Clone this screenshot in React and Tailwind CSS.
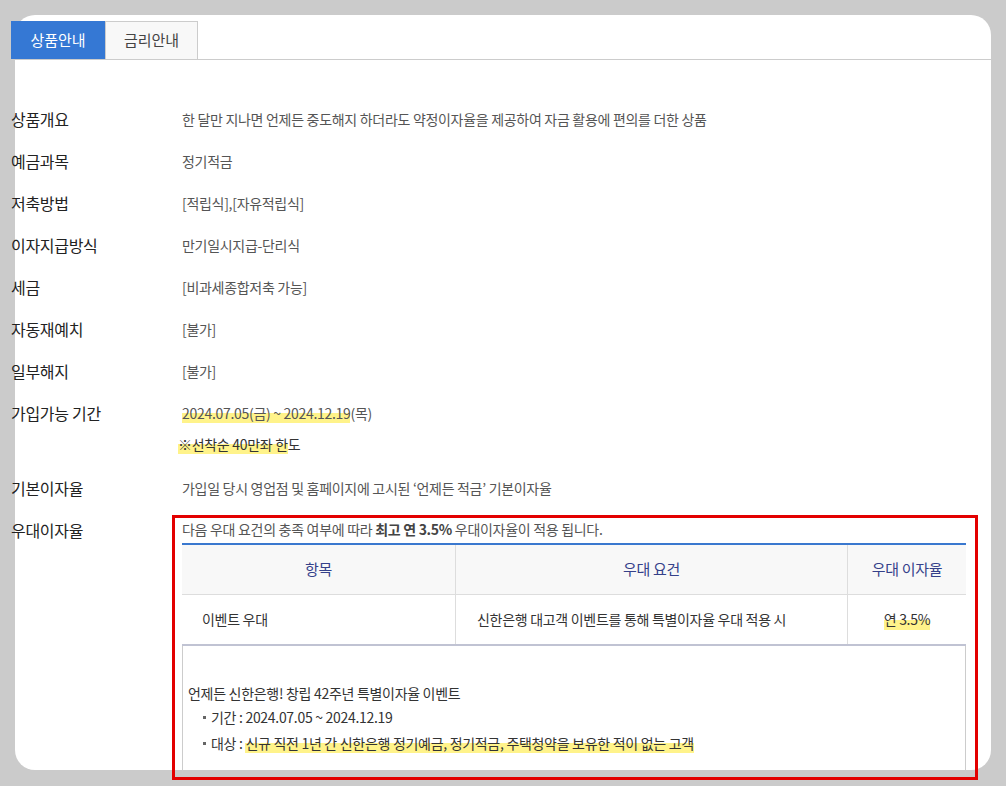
export default function App() {
  const rows = [
    ["상품개요", "한 달만 지나면 언제든 중도해지 하더라도 약정이자율을 제공하여 자금 활용에 편의를 더한 상품"],
    ["예금과목", "정기적금"],
    ["저축방법", "[적립식],[자유적립식]"],
    ["이자지급방식", "만기일시지급-단리식"],
    ["세금", "[비과세종합저축 가능]"],
    ["자동재예치", "[불가]"],
    ["일부해지", "[불가]"],
  ];
  const mark = "bg-[linear-gradient(transparent_50%,#fff38a_50%)]";

  return (
    <div className="h-[786px] overflow-hidden bg-[#cbcbcb] pt-[15px] pl-[15px] font-['Noto_Sans_CJK_KR','Noto_Sans',sans-serif]">
      <div className="relative w-[976px] h-[755px] bg-white rounded-[20px]">
        <div className="relative -ml-[4px] w-[980px] pt-[6px]">
          {/* tabs */}
          <div className="flex h-[39px] border-b border-[#cccccc]">
            <div className="w-[94px] bg-[#3578d4] text-white text-[15px] flex items-center justify-center">
              상품안내
            </div>
            <div className="w-[93px] bg-[#f8f8f8] border border-b-0 border-[#cccccc] text-[#444] text-[15px] flex items-center justify-center">
              금리안내
            </div>
          </div>

          <div className="pt-[38px] tracking-[-0.3px]">
            {rows.map(([label, value]) => (
              <div key={label} className="flex leading-[42px]">
                <div className="w-[171px] text-[16px] text-[#222]">{label}</div>
                <div className="text-[14px] text-[#555]">{value}</div>
              </div>
            ))}

            <div className="flex">
              <div className="w-[171px] text-[16px] text-[#222] leading-[42px]">가입가능 기간</div>
              <div className="text-[14px] text-[#555]">
                <div className="leading-[42px]">
                  <span className={mark}>2024.07.05(금) ~ 2024.12.19</span>(목)
                </div>
                <div className="leading-[20px] -ml-[4px] text-[#333]">
                  <span className={mark}>※선착순 40만좌 한</span>도
                </div>
              </div>
            </div>

            <div className="flex leading-[42px] mt-[13px]">
              <div className="w-[171px] text-[16px] text-[#222]">기본이자율</div>
              <div className="text-[14px] text-[#555]">가입일 당시 영업점 및 홈페이지에 고시된 ‘언제든 적금’ 기본이자율</div>
            </div>

            <div className="flex">
              <div className="w-[171px] text-[16px] text-[#222] leading-[42px]">우대이자율</div>
              <div className="w-[784px]">
                <div className="text-[14px] text-[#555] leading-[20px] pt-[10px] pb-[4px]">
                  다음 우대 요건의 충족 여부에 따라{" "}
                  <b className="text-[#444] font-bold">최고 연 3.5%</b> 우대이자율이 적용 됩니다.
                </div>
                <div className="border-t-2 border-[#3a78cf]">
                  <div className="flex h-[50px] bg-[#f8f8f8] border-b border-[#dddddd] text-[15px] text-[#35418a]">
                    <div className="w-[274px] flex items-center justify-center border-r border-[#dddddd]">항목</div>
                    <div className="w-[392px] flex items-center justify-center border-r border-[#dddddd]">우대 요건</div>
                    <div className="flex-1 flex items-center justify-center">우대 이자율</div>
                  </div>
                  <div className="flex h-[51px] border-b-2 border-[#c0c3d3] text-[14px] text-[#333]">
                    <div className="w-[274px] flex items-center pl-[20px] border-r border-[#dddddd]">이벤트 우대</div>
                    <div className="w-[392px] flex items-center pl-[21px] border-r border-[#dddddd]">
                      신한은행 대고객 이벤트를 통해 특별이자율 우대 적용 시
                    </div>
                    <div className="flex-1 flex items-center justify-center">
                      <span className={mark}>연 3.5%</span>
                    </div>
                  </div>
                  <div className="h-[129px] border border-t-0 border-[#cccccc] pl-[5px] pt-[37px] text-[14px] text-[#333]">
                    <div className="leading-[20px]">언제든 신한은행! 창립 42주년 특별이자율 이벤트</div>
                    <div className="leading-[20px] mt-[4px] pl-[15px] flex items-center">
                      <span className="inline-block w-[3px] h-[3px] bg-[#666] mr-[5px]" />기간 : 2024.07.05 ~ 2024.12.19
                    </div>
                    <div className="leading-[20px] mt-[6px] pl-[15px] flex items-center whitespace-pre">
                      <span className="inline-block w-[3px] h-[3px] bg-[#666] mr-[5px]" />대상 : <span className={mark}>신규 직전 1년 간 신한은행 정기예금, 정기적금, 주택청약을 보유한 적이 없는 고객</span>
                    </div>
                  </div>
                </div>
              </div>
            </div>
          </div>

          {/* red highlight box */}
          <div className="absolute left-[161px] top-[500px] w-[806px] h-[265px] border-[3px] border-[#e30000] pointer-events-none" />
        </div>
      </div>
    </div>
  );
}
